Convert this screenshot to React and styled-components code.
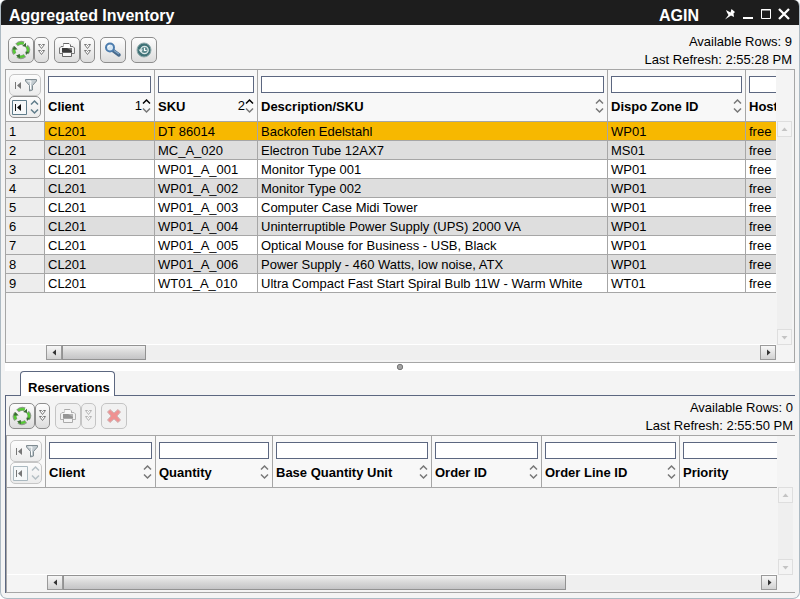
import React from 'react';
import styled, { createGlobalStyle, css } from 'styled-components';

const GlobalStyle = createGlobalStyle`
  * { box-sizing: border-box; }
  html, body { margin: 0; background: #fff; }
  body, button, input { font-family: "Liberation Sans", Arial, sans-serif; }
  button { margin: 0; padding: 0; cursor: pointer; }
`;

const line = '#a6a6a6';
const navy = '#5c6780';

const Window = styled.main`
  display: flex;
  flex-direction: column;
  height: 100vh;
  min-height: 480px;
  border: 1px solid #adbac3;
  border-top: 0;
  border-radius: 6px 6px 7px 7px;
  background: #f4f4f4;
  color: #000;
  overflow: hidden;
`;

const TitleBar = styled.header`
  display: flex;
  align-items: center;
  flex: none;
  height: 25px;
  margin: 0 -1px;
  padding: 6px 9px 0 9px;
  background: #1d1d1d;
  color: #fff;
  font-size: 16px;
  font-weight: bold;
  line-height: 18px;
`;

const Title = styled.h1`
  flex: 1;
  margin: 0;
  font-size: 16px;
`;

const WindowControls = styled.div`
  display: flex;
  align-items: center;
  gap: 4px;
  margin-left: 24px;
  padding-bottom: 3px;
`;

const WindowButton = styled.button`
  display: flex;
  width: 14px;
  height: 14px;
  border: 0;
  background: none;
`;

const Body = styled.div`
  display: flex;
  flex-direction: column;
  flex: 1;
  min-height: 0;
  padding: 0 4px 5px;
`;

const Toolbar = styled.div`
  display: flex;
  align-items: center;
  justify-content: space-between;
  flex: none;
  height: ${(p) => (p.$compact ? 39 : 44)}px;
  padding: ${(p) => (p.$compact ? '1px 2px 0 3px' : '6px 3px 0 3px')};
`;

const Tools = styled.div`
  display: flex;
  gap: 5px;
`;

const SplitButton = styled.div`
  display: flex;
`;

const ToolButton = styled.button`
  display: flex;
  align-items: center;
  justify-content: center;
  width: ${(p) => (p.$narrow ? 15 : 26)}px;
  height: 26px;
  border: 1px solid #8e8e8e;
  border-radius: 5px;
  background: linear-gradient(#fdfdfd, #ececec 55%, #dcdcdc);
  ${(p) => p.disabled && css`
    border-color: #c4c4c4;
    background: #f1f1f1;
    cursor: default;
    svg { opacity: 0.5; }
  `}
`;

const Status = styled.div`
  padding-top: 2px;
  font-size: 13px;
  line-height: 18px;
  text-align: right;
`;

const GridFrame = styled.section`
  display: grid;
  grid-template-columns: minmax(0, 1fr) 18px;
  grid-template-rows: minmax(0, 1fr) 17px;
  flex: ${(p) => p.$grow} 1 0;
  min-height: 0;
  border: 1px solid ${line};
  ${(p) => p.$open && css`border-right: 0;`}
`;

const TableArea = styled.div`
  min-height: 0;
  overflow: hidden;
  border-bottom: 1px solid #fff;
`;

const Table = styled.table`
  width: max-content;
  min-width: 100%;
  table-layout: fixed;
  border-collapse: separate;
  border-spacing: 0;
  font-size: 13px;
  line-height: 16px;
`;

const Col = styled.col`
  width: ${(p) => p.$width}px;
`;

const HeadCell = styled.th`
  height: 52px;
  padding: 6px 3px 0;
  border: solid ${line};
  border-width: 0 1px 1px 0;
  background: #f8f8f8;
  text-align: left;
  vertical-align: top;
`;

const CornerCell = styled(HeadCell)`
  padding: 4px 3px 0;
`;

const CornerButton = styled.button`
  display: flex;
  align-items: center;
  justify-content: center;
  gap: 3px;
  width: 32px;
  height: 22px;
  border: 1px solid ${(p) => (p.$strong ? '#8e8e8e' : '#c6c6c6')};
  border-radius: 5px;
  background: linear-gradient(#fcfcfc, #ececec);
`;

const FilterInput = styled.input`
  display: block;
  width: 100%;
  height: 17px;
  padding: 0 2px;
  border: 1px solid ${navy};
  border-radius: 0;
  background: #fff;
  font-size: 12px;
  outline: 0;
`;

const HeadLabel = styled.div`
  display: flex;
  align-items: center;
  height: 26px;
  white-space: nowrap;
`;

const HeadText = styled.span`
  flex: 1;
  padding-top: 2px;
`;

const SortOrder = styled.small`
  font-size: 13px;
  font-weight: normal;
`;

const SortButton = styled.button`
  display: flex;
  width: 9px;
  height: 18px;
  border: 0;
  background: none;
`;

const Row = styled.tr`
  background: ${(p) => (p.$selected ? '#f7b800' : p.$odd ? '#dedede' : '#fff')};
`;

const Cell = styled.td`
  height: 19px;
  padding: 2px 3px 0;
  border: solid ${line};
  border-width: 0 1px 1px 0;
  white-space: nowrap;
`;

const RowNumber = styled(Cell).attrs({ as: 'th', scope: 'row' })`
  background: #ededed;
  font-weight: normal;
  text-align: left;
`;

const VerticalBar = styled.div`
  display: flex;
  flex-direction: column;
  justify-content: space-between;
  margin: 51px 2px 0 1px;
  background: #efefef;
`;

const HorizontalBar = styled.div`
  display: flex;
  height: 15px;
  margin-left: 40px;
  background: #efefef;
`;

const ArrowButton = styled.button`
  display: flex;
  align-items: center;
  justify-content: center;
  flex: none;
  width: ${(p) => (p.disabled ? 15 : 16)}px;
  height: ${(p) => (p.disabled ? 16 : 15)}px;
  border: 1px solid ${(p) => (p.disabled ? '#dedede' : '#9a9a9a')};
  background: ${(p) => (p.disabled ? '#f4f4f4' : 'linear-gradient(#f7f7f7, #d2d2d2)')};
`;

const Track = styled.div`
  flex: 1;
`;

const Thumb = styled.div`
  width: ${(p) => p.$size}%;
  height: 15px;
  border: 1px solid #929292;
  background: linear-gradient(#f0f0f0, #d8d8d8 48%, #c4c4c6);
`;

const Splitter = styled.div`
  display: flex;
  align-items: center;
  justify-content: center;
  flex: none;
  height: 8px;
  background: #fff;
`;

const TabList = styled.div`
  display: flex;
  flex: none;
  height: 25px;
  padding-left: 15px;
  border-bottom: 1px solid ${navy};
`;

const Tab = styled.button`
  height: 25px;
  padding: 6px 4px 0 7px;
  border: 1px solid ${navy};
  border-bottom: 0;
  border-radius: 4px 4px 0 0;
  background: #fff;
  font-size: 13px;
  font-weight: bold;
`;

const TabPanel = styled.div`
  display: flex;
  flex-direction: column;
  flex: 197 1 0;
  min-height: 0;
  border-left: 1px solid ${navy};
`;

const RefreshIcon = () => (
  <svg width="20" height="20" viewBox="0 0 18 18">
    <g fill="none" stroke="#8f9c8c" strokeWidth="3.400">
      <path d="M5 4.500Q8 1.500 11.500 3" />
      <path d="M14 5.500Q17 8 14.500 12" />
      <path d="M12.500 14Q9 17 6 14.500" />
      <path d="M3.500 12.500Q1 9.500 3.500 6.500" />
    </g>
    <g fill="none" stroke="#55cc33" strokeWidth="2">
      <path d="M5.500 4Q8 2 11.500 3.200" />
      <path d="M14 6Q16.500 8.500 14.500 11.500" />
      <path d="M12 14Q9 16 6 14.500" />
      <path d="M3.500 12Q1.800 9.500 3.300 7" />
    </g>
    <g fill="#3a6b34">
      <path d="M10 5.500L13.500 2.500V6.200Z" />
      <path d="M13 10.500H16.500L13.500 13.500Z" />
      <path d="M8 12.500V16.500L4.500 14Z" />
      <path d="M1.500 8.500L3 5.500L6 8.500Z" />
    </g>
  </svg>
);

const MoreIcon = () => (
  <svg width="9" height="14" viewBox="0 0 9 14" fill="#fff" stroke="#777" strokeWidth="1">
    <path d="M1.500 1.500H3.500L4.500 2.500L5.500 1.500H7.500L4.500 5.500Z" />
    <path d="M1.500 7.500H3.500L4.500 8.500L5.500 7.500H7.500L4.500 11.500Z" />
  </svg>
);

const PrintIcon = () => (
  <svg width="18" height="16" viewBox="0 0 18 16">
    <path d="M5.500 6V1.500H11L12.500 3V6" fill="#fff" stroke="#666" />
    <path d="M3 4.500H15L16.500 6V11.500H1.500V6Z" fill="#f2f2f2" stroke="#777" />
    <path d="M5.500 2H11L12 3V6H5.500Z" fill="#fff" />
    <path d="M4 6H14V10.500H4Z" fill="#3a3a3a" />
    <path d="M9 6H14V9Z" fill="#777" />
    <path d="M4.500 10.500H13.500V14.500H4.500Z" fill="#f8f8f8" stroke="#666" />
  </svg>
);

const SearchIcon = () => (
  <svg width="18" height="16" viewBox="0 0 18 16">
    <path d="M9 8.500L15 13" stroke="#47698b" strokeWidth="3.500" strokeLinecap="round" />
    <path d="M10 8.500L15 12" stroke="#83a7c8" strokeWidth="1.200" />
    <circle cx="6" cy="5.500" r="4" fill="#d7e7f4" stroke="#4d7dae" strokeWidth="2" />
    <path d="M4 5Q4.500 3.500 6 3.500" fill="none" stroke="#fff" />
  </svg>
);

const HistoryIcon = () => (
  <svg width="16" height="16" viewBox="0 0 16 16" fill="none">
    <circle cx="8" cy="8" r="7" fill="#3f7277" stroke="#8fa9ab" />
    <circle cx="8.500" cy="8" r="3.700" stroke="#dbe8e8" strokeWidth="1.300" fill="#5b898d" />
    <path d="M2.500 7.500H7L4.700 10.500Z" fill="#dbe8e8" />
    <path d="M8.500 5.800V8.500H10.500" stroke="#fff" strokeWidth="1.200" />
  </svg>
);

const DeleteIcon = () => (
  <svg width="16" height="16" viewBox="0 0 16 16">
    <path d="M1.500 4L4 1.500L8 5L12 1.500L14.500 4L11 8L14.500 12L12 14.500L8 11L4 14.500L1.500 12L5 8Z" fill="#ef3434" stroke="#ad7777" />
  </svg>
);

const SkipIcon = ({ dark }) => (
  <svg width={dark ? 15 : 8} height="15" viewBox={dark ? '0 0 15 15' : '0 0 8 15'}>
    {dark && <path d="M0.500 0.500H14.500V14.500H0.500Z" fill="#f6f8f9" stroke={dark === 'on' ? '#607d8b' : '#abb9c0'} />}
    <path d={dark ? 'M3 4H4V11H3ZM9 4V11L5 7.500Z' : 'M1 4H2V11H1ZM7 4V11L3 7.500Z'} fill={dark === 'on' ? '#111' : '#777'} />
  </svg>
);

const FunnelIcon = () => (
  <svg width="12" height="14" viewBox="0 0 12 14">
    <path d="M0.500 1.500H11.500V3L7.500 7.500V12L4.500 13V7.500L0.500 3Z" fill="#c3ccd1" stroke="#7f8b91" />
    <path d="M2.500 3H6L5.500 6.500V11" fill="none" stroke="#fff" />
  </svg>
);

const SortIcon = ({ up = '#777', down = '#777' }) => (
  <svg width="9" height="18" viewBox="0 0 9 18" fill="none" strokeWidth="1.500">
    <path d="M1 6.500L4.500 3L8 6.500" stroke={up} />
    <path d="M1 11.500L4.500 15L8 11.500" stroke={down} />
  </svg>
);

const ArrowIcon = ({ turn = 0, faint }) => (
  <svg width="7" height="7" viewBox="0 0 7 7">
    <path d="M5 0.500V6.500L1.500 3.500Z" fill={faint ? '#c4c4c4' : '#333'} transform={`rotate(${turn} 3.500 3.500)`} />
  </svg>
);

const GripIcon = () => (
  <svg width="8" height="8" viewBox="0 0 8 8">
    <circle cx="4" cy="4" r="2.700" fill="#a2a2a2" stroke="#777" />
  </svg>
);

const controls = [
  ['Pin', <path key="p" d="M3 3L7.500 5.500L8.500 2L12 5L10.500 6.500L11 10L8 8.500L2 12.500L5.500 8L4 5.500Z" fill="#fff" />],
  ['Minimize', <path key="p" d="M2 11H12" stroke="#fff" strokeWidth="2" />],
  ['Maximize', <path key="p" d="M2.500 2.500H11.500V11.500H2.500ZM2 3H12" fill="none" stroke="#fff" strokeWidth="1" />],
  ['Close', <path key="p" d="M2 2L12 12M12 2L2 12" stroke="#fff" strokeWidth="2.300" />],
];

const inventoryColumns = [
  { label: 'Client', width: 110, order: 1 },
  { label: 'SKU', width: 103, order: 2 },
  { label: 'Description/SKU', width: 350 },
  { label: 'Dispo Zone ID', width: 138 },
  { label: 'Host', width: 110 },
];

const inventoryRows = [
  ['CL201', 'DT 86014', 'Backofen Edelstahl', 'WP01', 'free'],
  ['CL201', 'MC_A_020', 'Electron Tube 12AX7', 'MS01', 'free'],
  ['CL201', 'WP01_A_001', 'Monitor Type 001', 'WP01', 'free'],
  ['CL201', 'WP01_A_002', 'Monitor Type 002', 'WP01', 'free'],
  ['CL201', 'WP01_A_003', 'Computer Case Midi Tower', 'WP01', 'free'],
  ['CL201', 'WP01_A_004', 'Uninterruptible Power Supply (UPS) 2000 VA', 'WP01', 'free'],
  ['CL201', 'WP01_A_005', 'Optical Mouse for Business - USB, Black', 'WP01', 'free'],
  ['CL201', 'WP01_A_006', 'Power Supply - 460 Watts, low noise, ATX', 'WP01', 'free'],
  ['CL201', 'WT01_A_010', 'Ultra Compact Fast Start Spiral Bulb 11W - Warm White', 'WT01', 'free'],
];

const reservationColumns = [
  { label: 'Client', width: 110 },
  { label: 'Quantity', width: 117 },
  { label: 'Base Quantity Unit', width: 159 },
  { label: 'Order ID', width: 110 },
  { label: 'Order Line ID', width: 138 },
  { label: 'Priority', width: 138 },
];

function DataGrid({ name, columns, rows, thumb, grow, open }) {
  const active = rows.length > 0;
  return (
    <GridFrame $grow={grow} $open={open} aria-label={name}>
      <TableArea>
        <Table>
          <colgroup>
            <Col $width={39} />
            {columns.map((c) => <Col key={c.label} $width={c.width} />)}
          </colgroup>
          <thead>
            <tr>
              <CornerCell>
                <CornerButton aria-label="Clear filter"><SkipIcon /><FunnelIcon /></CornerButton>
                <CornerButton $strong={active} disabled={!active} aria-label="Clear sorting">
                  <SkipIcon dark={active ? 'on' : 'off'} />
                  <SortIcon up={active ? '#607d8b' : '#b5bfc4'} down={active ? '#607d8b' : '#b5bfc4'} />
                </CornerButton>
              </CornerCell>
              {columns.map((c) => (
                <HeadCell key={c.label} scope="col">
                  <FilterInput type="text" aria-label={`Filter ${c.label}`} />
                  <HeadLabel>
                    <HeadText>{c.label}</HeadText>
                    {c.order && <SortOrder>{c.order}</SortOrder>}
                    <SortButton aria-label={`Sort by ${c.label}`}>
                      <SortIcon up={c.order ? '#000' : '#777'} />
                    </SortButton>
                  </HeadLabel>
                </HeadCell>
              ))}
            </tr>
          </thead>
          <tbody>
            {rows.map((row, i) => (
              <Row key={row[1]} $selected={i === 0} $odd={i % 2 === 1}>
                <RowNumber>{i + 1}</RowNumber>
                {row.map((value, j) => <Cell key={columns[j].label}>{value}</Cell>)}
              </Row>
            ))}
          </tbody>
        </Table>
      </TableArea>
      <VerticalBar>
        <ArrowButton disabled aria-label="Scroll up"><ArrowIcon turn={90} faint /></ArrowButton>
        <ArrowButton disabled aria-label="Scroll down"><ArrowIcon turn={270} faint /></ArrowButton>
      </VerticalBar>
      <HorizontalBar>
        <ArrowButton aria-label="Scroll left"><ArrowIcon /></ArrowButton>
        <Track><Thumb $size={thumb} /></Track>
        <ArrowButton aria-label="Scroll right"><ArrowIcon turn={180} /></ArrowButton>
      </HorizontalBar>
    </GridFrame>
  );
}

function Split({ label, icon, disabled }) {
  return (
    <SplitButton>
      <ToolButton disabled={disabled} aria-label={label}>{icon}</ToolButton>
      <ToolButton $narrow disabled={disabled} aria-label={`${label} options`}><MoreIcon /></ToolButton>
    </SplitButton>
  );
}

export default function App() {
  return (
    <>
      <GlobalStyle />
      <Window>
        <TitleBar>
          <Title>Aggregated Inventory</Title>
          AGIN
          <WindowControls>
            {controls.map(([label, shape]) => (
              <WindowButton key={label} aria-label={label}>
                <svg width="14" height="14" viewBox="0 0 14 14">{shape}</svg>
              </WindowButton>
            ))}
          </WindowControls>
        </TitleBar>
        <Body>
          <Toolbar>
            <Tools>
              <Split label="Refresh" icon={<RefreshIcon />} />
              <Split label="Print" icon={<PrintIcon />} />
              <ToolButton aria-label="Search"><SearchIcon /></ToolButton>
              <ToolButton aria-label="History"><HistoryIcon /></ToolButton>
            </Tools>
            <Status>
              <div>Available Rows: 9</div>
              <div>Last Refresh: 2:55:28 PM</div>
            </Status>
          </Toolbar>
          <DataGrid name="Inventory" columns={inventoryColumns} rows={inventoryRows} thumb={12} grow={292} />
          <Splitter><GripIcon /></Splitter>
          <TabList role="tablist">
            <Tab role="tab" aria-selected="true">Reservations</Tab>
          </TabList>
          <TabPanel role="tabpanel" aria-label="Reservations">
            <Toolbar $compact>
              <Tools>
                <Split label="Refresh" icon={<RefreshIcon />} />
                <Split label="Print" icon={<PrintIcon />} disabled />
                <ToolButton disabled aria-label="Delete"><DeleteIcon /></ToolButton>
              </Tools>
              <Status>
                <div>Available Rows: 0</div>
                <div>Last Refresh: 2:55:50 PM</div>
              </Status>
            </Toolbar>
            <DataGrid name="Reservations" columns={reservationColumns} rows={[]} thumb={72} grow={1} open />
          </TabPanel>
        </Body>
      </Window>
    </>
  );
}
